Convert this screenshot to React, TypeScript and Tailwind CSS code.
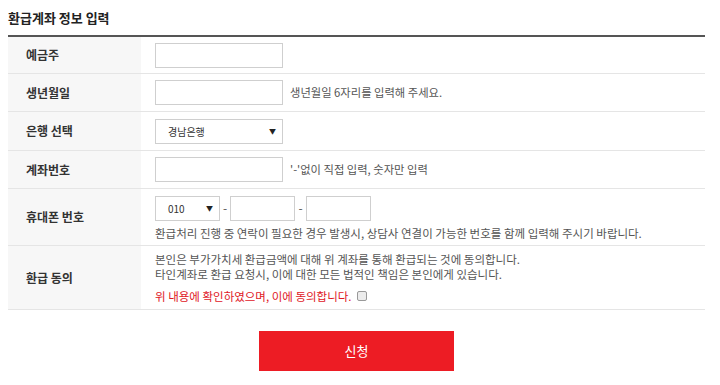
const font = { fontFamily: '"Noto Sans CJK KR", "Noto Sans", sans-serif' };

function Row({ label, h, children }: { label: string; h: string; children: React.ReactNode }) {
  return (
    <div className={`flex border-b border-[#e5e5e5] ${h}`}>
      <div className="w-[133px] shrink-0 bg-[#f7f7f7] pl-[18px] flex items-center text-[12px] font-bold text-[#333]">
        {label}
      </div>
      <div className="flex-1 pl-[14px] flex flex-col justify-center">{children}</div>
    </div>
  );
}

function Box({ w = 'w-[128px]' }: { w?: string }) {
  return <div className={`${w} h-[25px] border border-[#cfcfcf] bg-white`} />;
}

function Select({ value, w }: { value: string; w: string }) {
  return (
    <div className={`${w} h-[25px] border border-[#cfcfcf] bg-white flex items-center justify-between pl-[12px] pr-[6px]`}>
      <span className="text-[10px] text-[#333]">{value}</span>
      <span className="text-[7px] text-[#222]">▼</span>
    </div>
  );
}

export default function App() {
  return (
    <div className="w-[720px] h-[385px] bg-white px-2" style={font}>
      <div className="w-[697px]">
        <div className="h-[35px] flex items-center text-[13px] font-bold text-[#222]">환급계좌 정보 입력</div>
        <div className="border-t-2 border-[#555]">
          <Row label="예금주" h="h-[37px]">
            <Box />
          </Row>
          <Row label="생년월일" h="h-[38px]">
            <div className="flex items-center gap-[7px]">
              <Box />
              <span className="text-[11.3px] text-[#555]">생년월일 6자리를 입력해 주세요.</span>
            </div>
          </Row>
          <Row label="은행 선택" h="h-[39px]">
            <Select value="경남은행" w="w-[128px]" />
          </Row>
          <Row label="계좌번호" h="h-[38px]">
            <div className="flex items-center gap-[7px]">
              <Box />
              <span className="text-[11.3px] text-[#555]">'-'없이 직접 입력, 숫자만 입력</span>
            </div>
          </Row>
          <Row label="휴대폰 번호" h="h-[57px]">
            <div className="flex items-center mt-[2px]">
              <Select value="010" w="w-[65px]" />
              <span className="w-[10px] text-center text-[12px] text-[#555]">-</span>
              <Box w="w-[65px]" />
              <span className="w-[11px] text-center text-[12px] text-[#555]">-</span>
              <Box w="w-[65px]" />
            </div>
            <div className="mt-[4px] text-[11.5px] text-[#555] leading-[16px]">
              환급처리 진행 중 연락이 필요한 경우 발생시, 상담사 연결이 가능한 번호를 함께 입력해 주시기 바랍니다.
            </div>
          </Row>
          <Row label="환급 동의" h="h-[64px]">
            <div className="text-[11.5px] text-[#555] leading-[15px]">
              <div>본인은 부가가치세 환급금액에 대해 위 계좌를 통해 환급되는 것에 동의합니다.</div>
              <div>타인계좌로 환급 요청시, 이에 대한 모든 법적인 책임은 본인에게 있습니다.</div>
            </div>
            <div className="mt-[7px] flex items-center gap-[5px] text-[11.5px] text-[#e0161e] leading-[15px]">
              <span>위 내용에 확인하였으며, 이에 동의합니다.</span>
              <span className="w-[10px] h-[10px] border border-[#999] bg-[#ececec] rounded-[2px]" />
            </div>
          </Row>
        </div>
        <div className="flex justify-center pt-[21px]">
          <div className="w-[195px] h-[40px] bg-[#ed1c24] flex items-center justify-center text-white text-[13px]">
            신청
          </div>
        </div>
      </div>
    </div>
  );
}
